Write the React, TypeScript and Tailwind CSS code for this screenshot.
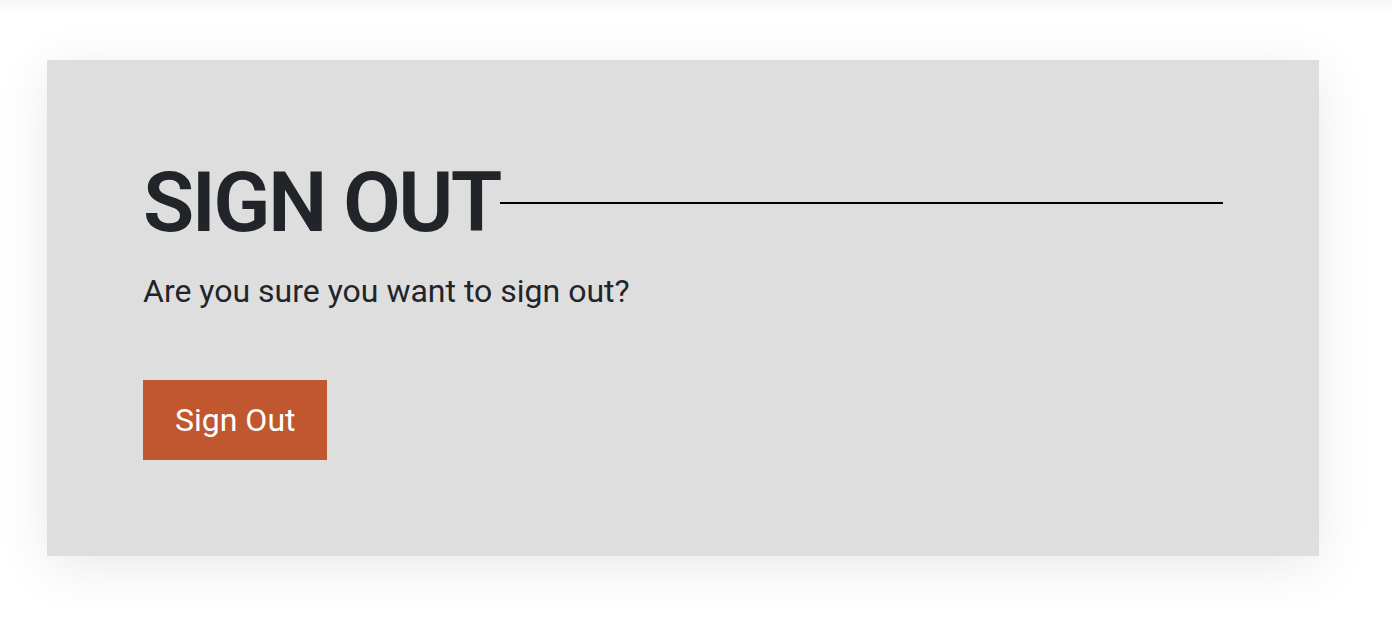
export default function App() {
  return (
    <div className="min-h-screen bg-white font-['Roboto',sans-serif] text-[#212529]">
      <div className="h-[14px] bg-gradient-to-b from-[#f6f6f6] to-white"></div>

      <div className="ml-[47px] mt-[46px] w-[1272px] bg-[#dedede] px-24 pt-[93px] pb-24 shadow-[0_10px_50px_rgba(0,0,0,0.09)]">
        <div className="flex items-center">
          <h1 className="text-[84px] font-semibold leading-[1.2] tracking-[-2.6px] whitespace-nowrap">SIGN OUT</h1>
          <div className="h-[2px] flex-1 bg-black"></div>
        </div>

        <p className="mt-[13px] text-[32px] leading-[1.5]">Are you sure you want to sign out?</p>

        <button className="mt-[65px] bg-[#c1572e] px-8 py-4 text-[32px] leading-[1.5] text-white">
          Sign Out
        </button>
      </div>
    </div>
  );
}
